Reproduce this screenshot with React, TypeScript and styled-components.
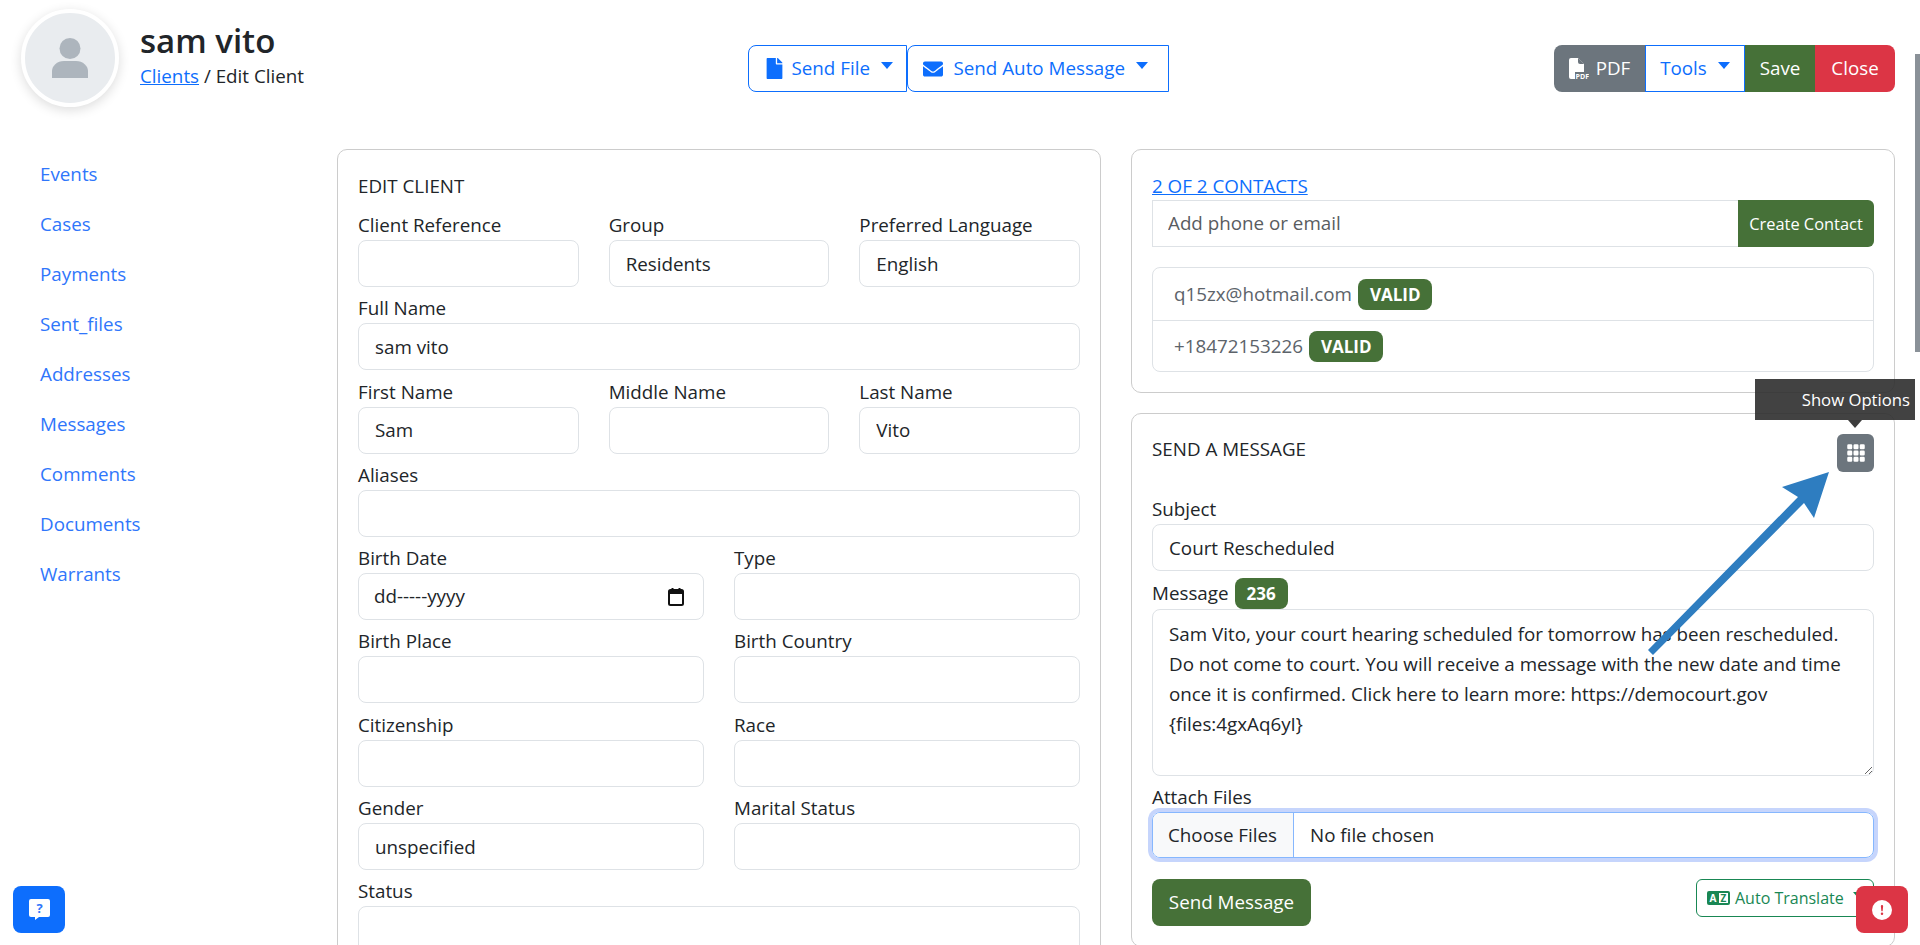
import React from 'react'
import styled, { createGlobalStyle } from 'styled-components'
import { FaFile, FaEnvelope } from 'react-icons/fa'
import { BsGrid3X3GapFill, BsExclamationCircleFill } from 'react-icons/bs'

const GlobalStyle = createGlobalStyle`
    html, body {
        margin: 0;
        height: 945px;
        overflow: hidden;
        background: #fff;
    }
    body {
        font-family: "Open Sans", "Liberation Sans", sans-serif;
        font-size: 18.8px;
        line-height: 27px;
        color: #212529;
    }
    * { box-sizing: border-box; }
`

const Page = styled.div`
    position: relative;
    width: 1920px;
    height: 945px;
    overflow: hidden;
`

const Header = styled.header`
    display: grid;
    grid-template-columns: 1fr auto 1fr;
    height: 149px;
    padding: 9px 25px 0 21px;
`

const Identity = styled.div`
    display: flex;
    gap: 21px;
`

const Avatar = styled.div`
    width: 98px;
    height: 98px;
    border-radius: 50%;
    background: #e9ecef;
    border: 4px solid #fff;
    box-shadow: 0 3px 12px rgba(0, 0, 0, 0.14);
    display: flex;
    align-items: center;
    justify-content: center;
`

const ClientName = styled.h1`
    margin: 10px 0 0;
    font-size: 33px;
    line-height: 44px;
    font-weight: 600;
`

const Breadcrumb = styled.div`
    margin-top: 0;
`

const Link = styled.a`
    color: #0d6efd;
`

const CenterActions = styled.div`
    display: flex;
    margin-top: 36px;
    height: 47px;
`

const RightActions = styled.div`
    display: flex;
    justify-content: flex-end;
    margin-top: 36px;
    height: 47px;
`

const OutlineButton = styled.button<{ $width: number }>`
    width: ${p => p.$width}px;
    height: 47px;
    display: flex;
    align-items: center;
    gap: 7px;
    background: #fff;
    border: 1px solid #0d6efd;
    border-radius: 8px 0 0 8px;
    color: #0d6efd;
    font: inherit;
    padding: 0 0 0 15px;
`

const EnvelopeIcon = styled(FaEnvelope)`
    margin-right: 4px;
`

const Caret = styled.span`
    display: inline-block;
    margin: -6px 0 0 4px;
    border-top: 7px solid currentColor;
    border-left: 6px solid transparent;
    border-right: 6px solid transparent;
`

const colors: Record<string, string> = {
    gray: '#6c757d',
    white: '#fff',
    green: '#467138',
    red: '#dc3545',
}

const GroupButton = styled.button<{ $kind: string; $width: number }>`
    width: ${p => p.$width}px;
    height: 47px;
    display: flex;
    align-items: center;
    justify-content: center;
    gap: 7px;
    font: inherit;
    padding: 0;
    background: ${p => colors[p.$kind]};
    color: ${p => (p.$kind === 'white' ? '#0d6efd' : '#fff')};
    border: ${p => (p.$kind === 'white' ? '1px solid #0d6efd' : 'none')};
    &:first-child { border-radius: 8px 0 0 8px; }
    &:last-child { border-radius: 0 8px 8px 0; }
`

const Body = styled.div`
    display: flex;
`

const SideNav = styled.nav`
    width: 337px;
    display: flex;
    flex-direction: column;
    padding-left: 40px;
`

const NavLink = styled.a`
    height: 50px;
    padding-top: 1px;
    display: flex;
    align-items: center;
    color: #2f76fb;
    text-decoration: none;
`

const Columns = styled.div`
    display: grid;
    grid-template-columns: 764px 764px;
    gap: 30px;
    align-items: start;
`

const Stack = styled.div`
    display: flex;
    flex-direction: column;
    gap: 20px;
`

const Card = styled.section`
    border: 1px solid #ccc;
    border-radius: 10px;
    padding: 23px 20px 20px;
`

const CardTitle = styled.div`
    height: 27px;
    line-height: 26px;
    text-transform: uppercase;
    margin-bottom: 13px;
`

const ContactTitle = styled(CardTitle)`
    margin-bottom: 0;
`

const FormRow = styled.div<{ $cols: number }>`
    display: grid;
    grid-template-columns: repeat(${p => p.$cols}, 1fr);
    column-gap: 30px;
`

const FieldBox = styled.div`
    margin-bottom: 9.3px;
`

const Label = styled.label`
    display: block;
    height: 27px;
    line-height: 25px;
`

const Input = styled.input`
    display: block;
    width: 100%;
    height: 47px;
    padding: 0 16px;
    border: 1px solid #dee2e6;
    border-radius: 8px;
    background: #fff;
    color: #212529;
    font: inherit;
    outline: none;
`

const DateBox = styled.div`
    height: 47px;
    display: flex;
    align-items: center;
    justify-content: space-between;
    padding: 0 19px 0 15px;
    border: 1px solid #dee2e6;
    border-radius: 8px;
`

const InputGroup = styled.div`
    display: flex;
    height: 47px;
`

const ContactInput = styled.input`
    flex: 1;
    min-width: 0;
    padding: 0 15px;
    border: 1px solid #dee2e6;
    border-right: none;
    font: inherit;
    color: #212529;
    outline: none;
    &::placeholder { color: #595c5f; }
`

const CreateButton = styled.button`
    width: 136px;
    background: #467138;
    border: none;
    border-radius: 0 6px 6px 0;
    color: #fff;
    font-family: inherit;
    font-size: 16.4px;
    padding: 0;
`

const ContactList = styled.ul`
    list-style: none;
    margin: 20px 0 0;
    padding: 0;
    border: 1px solid #dee2e6;
    border-radius: 8px;
`

const ContactRow = styled.li`
    height: 51.5px;
    display: flex;
    align-items: center;
    gap: 6px;
    padding: 1px 0 0 21px;
    color: #5c636a;
    & + & { border-top: 1px solid #dee2e6; }
`

const Badge = styled.span`
    display: inline-flex;
    align-items: center;
    justify-content: center;
    height: 31px;
    padding: 0 12px;
    background: #467138;
    border-radius: 8px;
    color: #fff;
    font-size: 17px;
    font-weight: 700;
`

const MessageHead = styled.div`
    display: flex;
    justify-content: space-between;
    align-items: flex-start;
    margin-bottom: 25px;
`

const MessageTitle = styled.div`
    text-transform: uppercase;
    margin-top: -1px;
`

const OptionsWrap = styled.div`
    position: relative;
    margin-top: -3px;
`

const OptionsButton = styled.button`
    display: flex;
    align-items: center;
    justify-content: center;
    width: 37px;
    height: 38px;
    background: #6c757d;
    border: none;
    border-radius: 6px;
    color: #fff;
    padding: 0;
`

const Tooltip = styled.div`
    position: absolute;
    right: -41px;
    bottom: 52px;
    width: 160px;
    height: 41px;
    padding-right: 5px;
    display: flex;
    align-items: center;
    justify-content: flex-end;
    background: rgba(45, 45, 45, 0.9);
    color: #fff;
    font-size: 16.7px;
    &::after {
        content: '';
        position: absolute;
        left: 93px;
        top: 41px;
        border-top: 8px solid #3c3c3c;
        border-left: 7px solid transparent;
        border-right: 7px solid transparent;
    }
`

const MessageLabel = styled.div`
    display: flex;
    align-items: center;
    gap: 6px;
    height: 31px;
    margin-top: -2.3px;
`

const MessageText = styled.textarea`
    display: block;
    width: 100%;
    height: 167px;
    padding: 9px 16px;
    border: 1px solid #dee2e6;
    border-radius: 8px;
    font: inherit;
    line-height: 30px;
    color: #212529;
    outline: none;
    resize: vertical;
    overflow: hidden;
`

const AttachLabel = styled(Label)`
    margin-top: 9px;
`

const FilePicker = styled.div`
    display: flex;
    align-items: center;
    height: 46px;
    border: 1px solid #86b7fe;
    border-radius: 8px;
    box-shadow: 0 0 0 4px #c6d5fc;
    overflow: hidden;
`

const ChooseFiles = styled.span`
    height: 100%;
    display: flex;
    align-items: center;
    width: 141px;
    padding-left: 15px;
    background: #f8f9fa;
    border-right: 1px solid #86b7fe;
`

const NoFile = styled.span`
    padding-left: 16px;
`

const MessageFoot = styled.div`
    display: flex;
    justify-content: space-between;
    align-items: flex-start;
    margin-top: 21px;
`

const SendButton = styled.button`
    width: 159px;
    height: 47px;
    background: #467138;
    border: none;
    border-radius: 8px;
    color: #fff;
    font: inherit;
    padding: 0;
`

const TranslateButton = styled.button`
    width: 178px;
    height: 38px;
    display: flex;
    align-items: center;
    gap: 5px;
    padding: 0 0 0 10px;
    background: #fff;
    border: 1px solid #198754;
    border-radius: 6px;
    color: #198754;
    font-family: inherit;
    font-size: 16px;
`

const FloatButton = styled.button<{ $side: 'help' | 'alert' }>`
    position: absolute;
    top: 886px;
    left: ${p => (p.$side === 'help' ? '13px' : '1856px')};
    width: 52px;
    height: 47px;
    display: flex;
    align-items: center;
    justify-content: center;
    background: ${p => (p.$side === 'help' ? '#0d6efd' : '#dc3545')};
    border: none;
    border-radius: 8px;
    color: #fff;
    padding: 0;
`

const ScrollThumb = styled.div`
    position: absolute;
    top: 54px;
    right: 0;
    width: 5px;
    height: 298px;
    background: #8a9198;
`

const ArrowOverlay = styled.svg`
    position: absolute;
    top: 0;
    left: 0;
    pointer-events: none;
`

function Field({ label, value }: { label: string; value?: string }) {
    return (
        <FieldBox>
            <Label>{label}</Label>
            <Input defaultValue={value} readOnly />
        </FieldBox>
    )
}

function PersonIcon() {
    return (
        <svg width="36" height="40" viewBox="0 0 36 40" fill="#adb5bd">
            <ellipse cx="18" cy="10.5" rx="10.5" ry="10.5" />
            <path d="M0 40v-7C0 28 5 23 12 23h12c7 0 12 5 12 10v7z" />
        </svg>
    )
}

function PdfIcon() {
    return (
        <svg width="20" height="21" viewBox="0 0 20 21">
            <path fill="#fff" d="M2 0h7l6 6v8H6v7H2a2 2 0 0 1-2-2V2a2 2 0 0 1 2-2z" />
            <path fill="#6c757d" d="M9 0v4a2 2 0 0 0 2 2h4z" />
            <text x="6.5" y="20.5" fontSize="7" fontWeight="700" fill="#fff" fontFamily="Open Sans" textLength="13.5" lengthAdjust="spacingAndGlyphs">PDF</text>
        </svg>
    )
}

function CalendarIcon() {
    return (
        <svg width="16" height="18" viewBox="0 0 16 18">
            <rect x="1" y="2" width="14" height="15" rx="1.5" fill="none" stroke="#111" strokeWidth="2" />
            <rect x="1" y="2" width="14" height="4" fill="#111" />
            <rect x="3.5" y="0" width="2" height="3" fill="#111" />
            <rect x="10.5" y="0" width="2" height="3" fill="#111" />
        </svg>
    )
}

function TranslateIcon() {
    return (
        <svg width="23" height="14" viewBox="0 0 23 14">
            <rect width="23" height="14" rx="2" fill="#198754" />
            <rect x="12" y="2" width="9" height="10" fill="#fff" />
            <text x="2.5" y="11" fontSize="10" fontWeight="700" fill="#fff" fontFamily="Open Sans">A</text>
            <text x="13.5" y="11" fontSize="10" fontWeight="700" fill="#198754" fontFamily="Open Sans">Z</text>
        </svg>
    )
}

function HelpIcon() {
    return (
        <svg width="21" height="21" viewBox="0 0 21 21">
            <path fill="#fff" d="M2 0h17a2 2 0 0 1 2 2v14a2 2 0 0 1-2 2H10l-4 3v-3H2a2 2 0 0 1-2-2V2a2 2 0 0 1 2-2z" />
            <text x="10.5" y="14" textAnchor="middle" fontSize="13" fontWeight="700" fill="#2f76fb" fontFamily="Open Sans">?</text>
        </svg>
    )
}

const navItems = ['Events', 'Cases', 'Payments', 'Sent_files', 'Addresses', 'Messages', 'Comments', 'Documents', 'Warrants']

const messageBody = `Sam Vito, your court hearing scheduled for tomorrow has been rescheduled.
Do not come to court. You will receive a message with the new date and time
once it is confirmed. Click here to learn more: https://democourt.gov
{files:4gxAq6yI}`

export default function App() {
    return (
        <Page>
            <GlobalStyle />
            <Header>
                <Identity>
                    <Avatar><PersonIcon /></Avatar>
                    <div>
                        <ClientName>sam vito</ClientName>
                        <Breadcrumb><Link href="#">Clients</Link> / Edit Client</Breadcrumb>
                    </div>
                </Identity>
                <CenterActions>
                    <OutlineButton $width={159}>
                        <FaFile size={21} /> Send File <Caret />
                    </OutlineButton>
                    <OutlineButton $width={262}>
                        <EnvelopeIcon size={20} /> Send Auto Message <Caret />
                    </OutlineButton>
                </CenterActions>
                <RightActions>
                    <GroupButton $kind="gray" $width={91}><PdfIcon /> PDF</GroupButton>
                    <GroupButton $kind="white" $width={100}>Tools <Caret /></GroupButton>
                    <GroupButton $kind="green" $width={70}>Save</GroupButton>
                    <GroupButton $kind="red" $width={80}>Close</GroupButton>
                </RightActions>
            </Header>
            <Body>
                <SideNav>
                    {navItems.map(item => <NavLink key={item} href="#">{item}</NavLink>)}
                </SideNav>
                <Columns>
                    <Card>
                        <CardTitle>Edit Client</CardTitle>
                        <FormRow $cols={3}>
                            <Field label="Client Reference" />
                            <Field label="Group" value="Residents" />
                            <Field label="Preferred Language" value="English" />
                        </FormRow>
                        <Field label="Full Name" value="sam vito" />
                        <FormRow $cols={3}>
                            <Field label="First Name" value="Sam" />
                            <Field label="Middle Name" />
                            <Field label="Last Name" value="Vito" />
                        </FormRow>
                        <Field label="Aliases" />
                        <FormRow $cols={2}>
                            <FieldBox>
                                <Label>Birth Date</Label>
                                <DateBox>dd-----yyyy <CalendarIcon /></DateBox>
                            </FieldBox>
                            <Field label="Type" />
                            <Field label="Birth Place" />
                            <Field label="Birth Country" />
                            <Field label="Citizenship" />
                            <Field label="Race" />
                            <Field label="Gender" value="unspecified" />
                            <Field label="Marital Status" />
                        </FormRow>
                        <Field label="Status" />
                    </Card>
                    <Stack>
                        <Card>
                            <ContactTitle><Link href="#">2 of 2 contacts</Link></ContactTitle>
                            <InputGroup>
                                <ContactInput placeholder="Add phone or email" />
                                <CreateButton>Create Contact</CreateButton>
                            </InputGroup>
                            <ContactList>
                                <ContactRow>q15zx@hotmail.com <Badge>VALID</Badge></ContactRow>
                                <ContactRow>+18472153226 <Badge>VALID</Badge></ContactRow>
                            </ContactList>
                        </Card>
                        <Card>
                            <MessageHead>
                                <MessageTitle>Send a message</MessageTitle>
                                <OptionsWrap>
                                    <Tooltip>Show Options</Tooltip>
                                    <OptionsButton><BsGrid3X3GapFill size={20} /></OptionsButton>
                                </OptionsWrap>
                            </MessageHead>
                            <Field label="Subject" value="Court Rescheduled" />
                            <MessageLabel>Message <Badge>236</Badge></MessageLabel>
                            <MessageText defaultValue={messageBody} readOnly />
                            <AttachLabel>Attach Files</AttachLabel>
                            <FilePicker>
                                <ChooseFiles>Choose Files</ChooseFiles>
                                <NoFile>No file chosen</NoFile>
                            </FilePicker>
                            <MessageFoot>
                                <SendButton>Send Message</SendButton>
                                <TranslateButton><TranslateIcon /> Auto Translate <Caret /></TranslateButton>
                            </MessageFoot>
                        </Card>
                    </Stack>
                </Columns>
            </Body>
            <FloatButton $side="help"><HelpIcon /></FloatButton>
            <FloatButton $side="alert"><BsExclamationCircleFill size={20} /></FloatButton>
            <ScrollThumb />
            <ArrowOverlay width="1920" height="945" viewBox="0 0 1920 945">
                <path d="M1829 472 L1782 487 L1798 497 L1648 650 L1653 655 L1804 503 L1814 518 Z" fill="#2e7dc0" />
            </ArrowOverlay>
        </Page>
    )
}
